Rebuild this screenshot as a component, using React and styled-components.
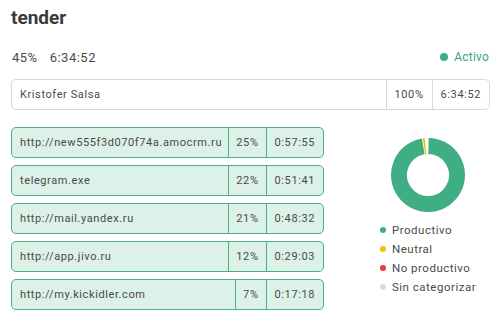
import React from 'react'
import styled, { createGlobalStyle } from 'styled-components'

const GlobalStyle = createGlobalStyle`
  body {
    margin: 0;
    background: #fff;
    font-family: Roboto, "Liberation Sans", sans-serif;
    color: #444;
  }
`

const Page = styled.div`
  width: 501px;
  height: 317px;
  padding: 7px 11px 0 11px;
  box-sizing: border-box;
`

const Title = styled.h1`
  margin: 0;
  font-size: 19px;
  font-weight: 700;
  line-height: 22px;
  color: #3a3a3a;
`

const Summary = styled.div`
  display: flex;
  align-items: center;
  margin-top: 19px;
  height: 18px;
  font-size: 13px;
  letter-spacing: 0.5px;
  color: #4a4a4a;
  padding-left: 1px;
  padding-right: 1px;
`

const SummaryValue = styled.span`
  margin-right: 12px;
`

const Status = styled.span`
  margin-left: auto;
  display: flex;
  align-items: center;
  gap: 6px;
  font-size: 12px;
  letter-spacing: 0.2px;
  color: #3aa57a;
`

const Dot = styled.span`
  width: ${p => p.size || 6}px;
  height: ${p => p.size || 6}px;
  border-radius: 50%;
  background: ${p => p.color};
  flex-shrink: 0;
`

const Row = styled.div`
  display: flex;
  height: 31px;
  box-sizing: border-box;
  border: 1px solid ${p => (p.tinted ? '#4aae86' : '#d9d9d9')};
  background: ${p => (p.tinted ? '#dcf1e8' : '#fff')};
  border-radius: 5px;
  font-size: 11px;
  letter-spacing: 0.6px;
  color: #4a4a4a;
`

const Cell = styled.div`
  display: flex;
  align-items: center;
  padding: 0 ${p => p.pad || 8}px;
  border-left: ${p => (p.first ? 'none' : `1px solid ${p.tinted ? '#4aae86' : '#d9d9d9'}`)};
  ${p => p.grow && 'flex: 1; min-width: 0;'}
  justify-content: ${p => (p.grow ? 'flex-start' : 'center')};
  white-space: nowrap;
`

const UserRow = styled(Row)`
  margin-top: 13px;
  width: 479px;
`

const Main = styled.div`
  display: flex;
  margin-top: 17px;
`

const List = styled.div`
  display: flex;
  flex-direction: column;
  gap: 7px;
  width: 313px;
`

const Side = styled.div`
  margin-left: 42px;
  width: 124px;
  display: flex;
  flex-direction: column;
  align-items: center;
  padding-top: 10px;
`

const Legend = styled.div`
  align-self: stretch;
  padding-left: 14px;
  margin-top: 10px;
  display: flex;
  flex-direction: column;
  gap: 5px;
`

const LegendItem = styled.div`
  display: flex;
  align-items: center;
  gap: 6px;
  height: 14px;
  font-size: 11.5px;
  letter-spacing: 0.5px;
  color: #4a4a4a;
`

const apps = [
  { name: 'http://new555f3d070f74a.amocrm.ru', pct: '25%', time: '0:57:55' },
  { name: 'telegram.exe', pct: '22%', time: '0:51:41' },
  { name: 'http://mail.yandex.ru', pct: '21%', time: '0:48:32' },
  { name: 'http://app.jivo.ru', pct: '12%', time: '0:29:03' },
  { name: 'http://my.kickidler.com', pct: '7%', time: '0:17:18' },
]

const legend = [
  { label: 'Productivo', color: '#3fae85' },
  { label: 'Neutral', color: '#f5c000' },
  { label: 'No productivo', color: '#e53945' },
  { label: 'Sin categorizar', color: '#d9dde2' },
]

const arc = (cx, cy, r, a0, a1) => {
  const rad = a => ((a - 90) * Math.PI) / 180
  const x0 = cx + r * Math.cos(rad(a0))
  const y0 = cy + r * Math.sin(rad(a0))
  const x1 = cx + r * Math.cos(rad(a1))
  const y1 = cy + r * Math.sin(rad(a1))
  const large = a1 - a0 > 180 ? 1 : 0
  return `M ${x0} ${y0} A ${r} ${r} 0 ${large} 1 ${x1} ${y1}`
}

const Donut = () => (
  <svg width="76" height="76" viewBox="0 0 76 76">
    <path d={arc(38, 38, 29, 1, 350.5)} fill="none" stroke="#3fae85" strokeWidth="16" />
    <path d={arc(38, 38, 29, 352, 355)} fill="none" stroke="#f5c000" strokeWidth="16" />
  </svg>
)

const App = () => (
  <Page>
    <GlobalStyle />
    <Title>tender</Title>
    <Summary>
      <SummaryValue>45%</SummaryValue>
      <SummaryValue>6:34:52</SummaryValue>
      <Status>
        <Dot color="#3fae85" size={8} />
        Activo
      </Status>
    </Summary>
    <UserRow>
      <Cell first grow>Kristofer Salsa</Cell>
      <Cell pad={8}>100%</Cell>
      <Cell pad={8}>6:34:52</Cell>
    </UserRow>
    <Main>
      <List>
        {apps.map(a => (
          <Row tinted key={a.name}>
            <Cell first grow tinted>{a.name}</Cell>
            <Cell tinted pad={7}>{a.pct}</Cell>
            <Cell tinted pad={8}>{a.time}</Cell>
          </Row>
        ))}
      </List>
      <Side>
        <Donut />
        <Legend>
          {legend.map(l => (
            <LegendItem key={l.label}>
              <Dot color={l.color} />
              {l.label}
            </LegendItem>
          ))}
        </Legend>
      </Side>
    </Main>
  </Page>
)

export default App
